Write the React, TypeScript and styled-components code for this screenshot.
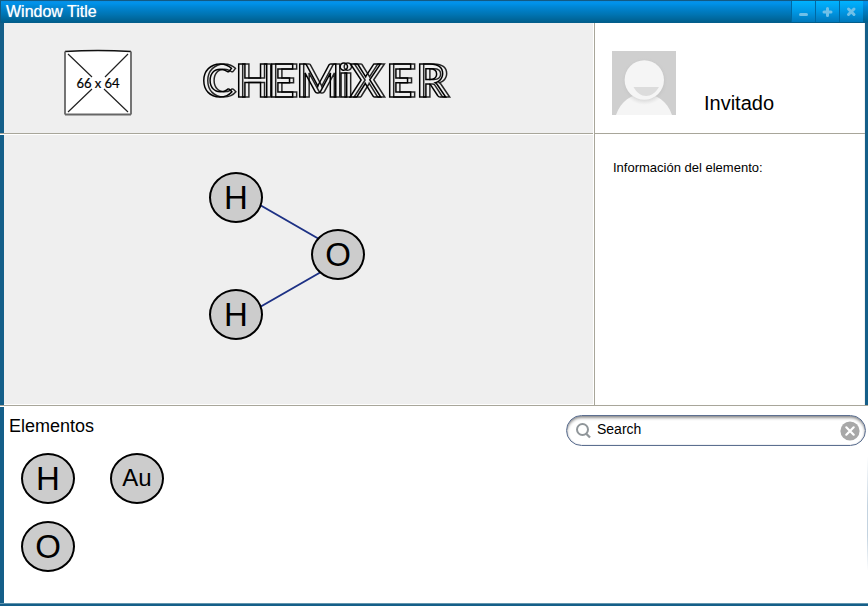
import React from "react";
import styled, { createGlobalStyle } from "styled-components";

const Global = createGlobalStyle`
  * { box-sizing: border-box; }
  body { margin: 0; background: #fff; color: #000; font-family: "Liberation Sans", Arial, sans-serif; overflow: hidden; }
  svg { display: block; }
`;

const Window = styled.div`
  width: 868px;
  height: 607px;
  display: grid;
  grid-template-rows: 23px 382px 198px 3px 1px;
  background: #fff;
`;

const TitleBar = styled.header`
  display: flex;
  border-top: 1px solid #125a83;
  border-left: 1px solid #125a83;
  background: linear-gradient(#0a8de2 0, #0093ec 2px, #0086d4 6px, #0073b0 14px, #005f8e 21px, #075c88 22px);
`;

const Title = styled.h1`
  flex: 1;
  margin: 0;
  padding-left: 5px;
  color: #fff;
  font-size: 16px;
  font-weight: 400;
  line-height: 22px;
  text-shadow: 0 0 1px rgba(255, 255, 255, 0.7);
`;

const Controls = styled.div`
  display: flex;
  height: 21px;
  margin-right: 5px;
`;

const Control = styled.button`
  width: 24px;
  height: 21px;
  padding: 0;
  border: 0;
  border-left: 1px solid #0068a2;
  background: linear-gradient(#00b2ff, #0098e5 50%, #0078bb);
`;

const Workspace = styled.div`
  display: grid;
  grid-template-columns: 4px 589px 272px 3px;
`;

const Edge = styled.div`
  background: #155f89;
`;

const Main = styled.main`
  display: grid;
  grid-template-rows: 110px 271px;
  background: #efefef;
  border-bottom: 1px solid #fff;
`;

const Brand = styled.div`
  display: flex;
  align-items: flex-start;
  padding: 26px 0 0 59px;
  gap: 66px;
`;

const Stage = styled.section`
  position: relative;
  margin-left: -4px;
  border-top: 1px solid #a8a69a;
  background: linear-gradient(#fff, #fff) 0 0 / 100% 1px no-repeat,
    linear-gradient(90deg, #155f89 4px, #efefef 4px);
`;

const Bonds = styled.svg`
  position: absolute;
  left: 0;
  top: 0;
`;

const Atom = styled.div<{ $small?: boolean }>`
  width: 54px;
  height: 51px;
  border: 2px solid #000;
  border-radius: 50%;
  background: #ccc;
  display: flex;
  align-items: center;
  justify-content: center;
  padding-bottom: ${(p) => (p.$small ? 2 : 0)}px;
  font-size: ${(p) => (p.$small ? 24 : 33)}px;
  line-height: 1;
`;

const Node = styled.div<{ $x: number; $y: number }>`
  position: absolute;
  left: ${(p) => p.$x}px;
  top: ${(p) => p.$y}px;
`;

const Sidebar = styled.aside`
  display: grid;
  grid-template-rows: 110px 272px;
  background: #fff;
  border-left: 1px solid #fff;
  box-shadow: inset 1px 0 #a8a69a, inset -1px 0 #f1f1f1;
`;

const Profile = styled.div`
  display: flex;
  align-items: flex-start;
  padding: 28px 0 0 18px;
  gap: 28px;
`;

const UserName = styled.div`
  padding-top: 41px;
  font-size: 20px;
  line-height: 23px;
`;

const Info = styled.section`
  border-top: 1px solid #a8a69a;
  padding: 26px 0 0 19px;
  font-size: 13px;
  line-height: 16px;
`;

const Palette = styled.section`
  display: flex;
  justify-content: space-between;
  border-top: 1px solid #a8a69a;
  background: linear-gradient(#fff, #fff) 0 0 / 4px 1px no-repeat,
    linear-gradient(90deg, #155f89 4px, #fff 4px);
`;

const Elements = styled.div`
  padding: 10px 0 0 9px;
`;

const Heading = styled.h2`
  margin: 0 0 17px;
  font-size: 18px;
  font-weight: 400;
  line-height: 20px;
`;

const AtomGrid = styled.div`
  display: grid;
  grid-template-columns: 54px 54px;
  gap: 17px 35px;
  margin-left: 12px;
`;

const SearchColumn = styled.div`
  padding: 9px 2px 0 0;
  background: linear-gradient(transparent 50px, #c3d3e0 100px, #c3d3e0 130px, transparent 165px) 100% 0 / 1px 100% no-repeat;
`;

const SearchBox = styled.div`
  display: flex;
  align-items: center;
  width: 300px;
  height: 31px;
  padding: 0 5px 0 9px;
  border: 1px solid #5c6f90;
  border-radius: 16px;
  background: #fff;
  box-shadow: inset 0 2px 3px rgba(0, 0, 0, 0.42), inset 0 0 1px #8b97ad;
`;

const SearchText = styled.span`
  flex: 1;
  padding: 0 0 3px 6px;
  font-size: 14px;
  line-height: 16px;
`;

const Footer = styled.div`
  border-top: 1px solid #6295ae;
  background: #155f89;
`;

const Placeholder = () => (
  <svg width="70" height="67" viewBox="0 0 70 67">
    <path d="M2 2.5Q35 .5 68 2.5V65.5H2Z" fill="#fff" stroke="none" />
    <path d="M2 2.5Q35 .5 68 2.5" fill="none" stroke="#111" strokeWidth="1.3" />
    <path d="M2 2.5V65.5M68 2.5V65.5M2 65.5H68" stroke="#666" strokeWidth="1.8" />
    <path d="M5 5L29 28M65 5L42 28M5 63L29 40M65 63L41 40" stroke="#222" strokeWidth="1.2" />
    <text x="35" y="39" textAnchor="middle" fontFamily="Lato, sans-serif" fontSize="13" stroke="#000" strokeWidth=".2" textLength="43">66 x 64</text>
  </svg>
);

const Logo = styled.svg`
  margin-top: 7px;
  overflow: visible;
  filter: drop-shadow(4px 0 0 rgba(0, 0, 0, 0.85));
`;

const LogoText = styled.text`
  font-family: Lato, sans-serif;
  font-size: 46px;
  font-weight: 700;
  fill: none;
  stroke: #000;
  stroke-width: 1.5px;
`;

const Avatar = () => (
  <svg width="64" height="64" viewBox="0 0 64 64">
    <defs>
      <radialGradient id="halo">
        <stop offset=".78" stopColor="#b9b9b9" />
        <stop offset="1" stopColor="#cfcfcf" stopOpacity="0" />
      </radialGradient>
    </defs>
    <path d="M0 0H64V64H0Z" fill="#cfcfcf" />
    <path d="M4 64C9 50 19 43 32 43S55 50 60 64Z" fill="#f5f5f5" />
    <circle cx="32.5" cy="30" r="24" fill="url(#halo)" opacity=".45" />
    <circle cx="32.3" cy="29" r="19.7" fill="#f5f5f5" />
    <path d="M21.5 36H47C40 48 28 48 21.5 36Z" fill="#dcdcdc" />
  </svg>
);

const glyphs = ["M8.5 13.5H14.5", "M8 11H15M11.5 7.5V14.5", "M8.5 8L14 13.5M14 8L8.5 13.5"];

export default function App() {
  return (
    <>
      <Global />
      <Window>
        <TitleBar>
          <Title>Window Title</Title>
          <Controls>
            {glyphs.map((d) => (
              <Control key={d}>
                <svg width="23" height="21">
                  <path d={d} stroke="#70c0e8" strokeWidth="3" strokeLinecap="round" />
                </svg>
              </Control>
            ))}
          </Controls>
        </TitleBar>
        <Workspace>
          <Edge />
          <Main>
            <Brand>
              <Placeholder />
              <Logo width="260" height="50">
                <LogoText x="3 36 69 97 139 151 187 217" y="41">CHEMiXER</LogoText>
              </Logo>
            </Brand>
            <Stage>
              <Bonds width="589" height="270">
                <path d="M260 71L319 105M260 173L321 138" stroke="#1d3185" strokeWidth="2" />
              </Bonds>
              <Node $x={209} $y={38}><Atom>H</Atom></Node>
              <Node $x={311} $y={95}><Atom>O</Atom></Node>
              <Node $x={209} $y={155}><Atom>H</Atom></Node>
            </Stage>
          </Main>
          <Sidebar>
            <Profile>
              <Avatar />
              <UserName>Invitado</UserName>
            </Profile>
            <Info>Información del elemento:</Info>
          </Sidebar>
          <Edge />
        </Workspace>
        <Palette>
          <Elements>
            <Heading>Elementos</Heading>
            <AtomGrid>
              <Atom>H</Atom>
              <Atom $small>Au</Atom>
              <Atom>O</Atom>
            </AtomGrid>
          </Elements>
          <SearchColumn>
            <SearchBox>
              <svg width="15" height="16" viewBox="0 0 15 16" fill="none" stroke="#90969a" strokeWidth="2">
                <circle cx="6.5" cy="6.5" r="5.5" />
                <path d="M10 10.5L14 14.5" strokeWidth="2.3" />
              </svg>
              <SearchText>Search</SearchText>
              <svg width="20" height="20">
                <circle cx="10" cy="10" r="9.6" fill="#a8a8a8" />
                <path d="M6.3 6.3L13.7 13.7M13.7 6.3L6.3 13.7" stroke="#fff" strokeWidth="2.2" strokeLinecap="round" />
              </svg>
            </SearchBox>
          </SearchColumn>
        </Palette>
        <Footer />
      </Window>
    </>
  );
}
